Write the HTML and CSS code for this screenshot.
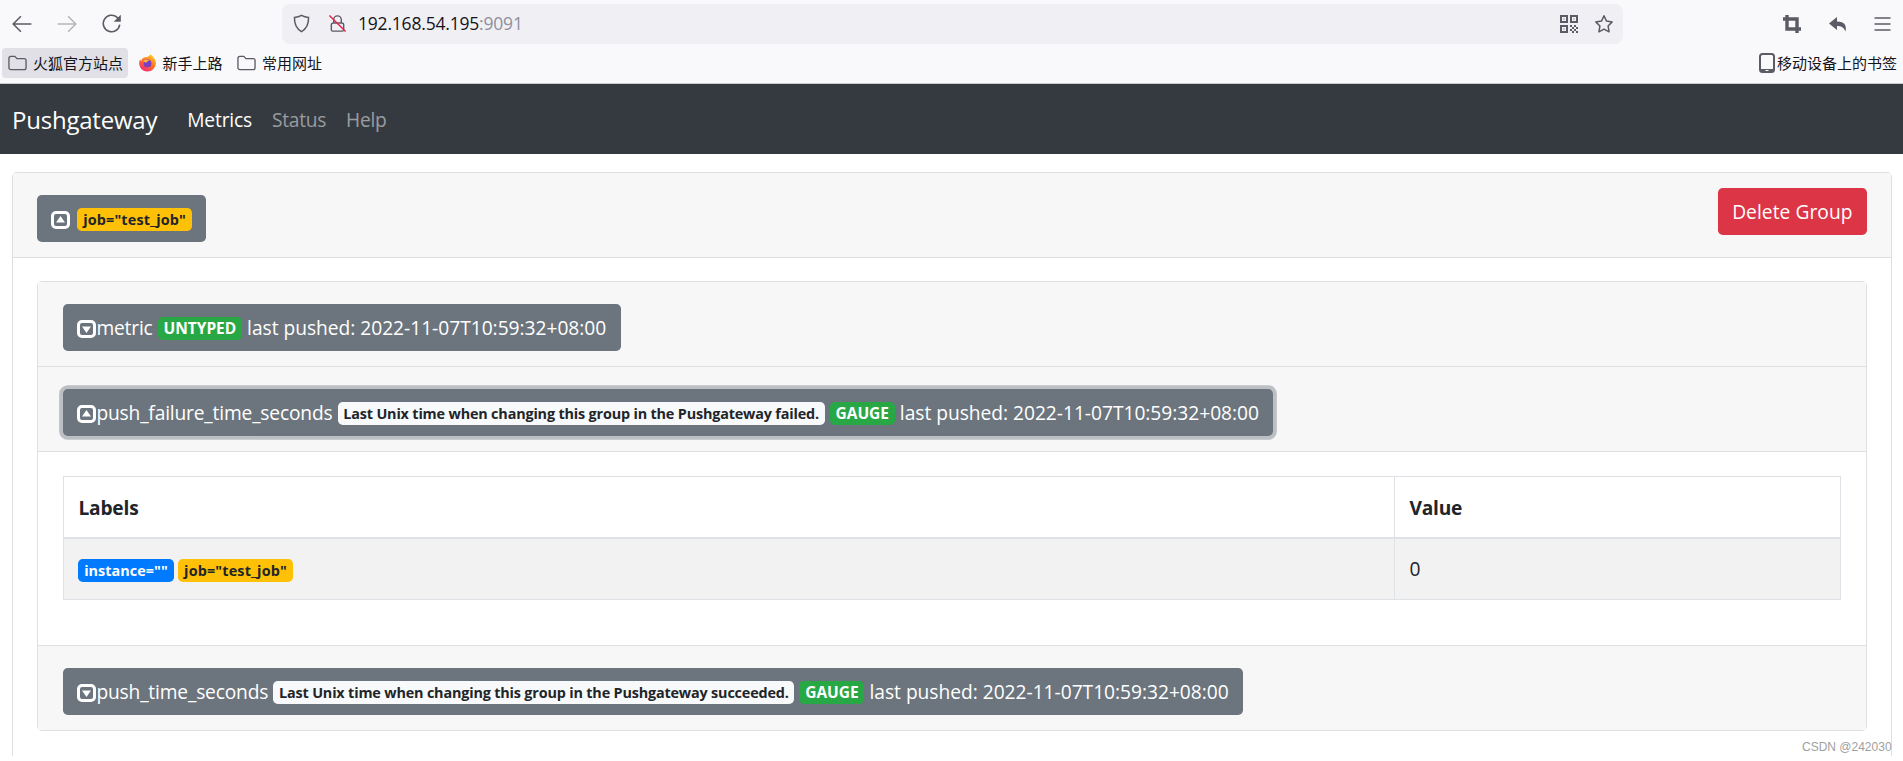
FILE: index.html
```html
<!DOCTYPE html>
<html lang="en">

<head>
    <meta charset="UTF-8">
    <title>Pushgateway</title>
    <link rel="stylesheet" href="styles.css">
</head>

<body>
    <svg class="defs" width="0" height="0">
        <symbol id="fold-up" viewBox="0 0 19 18">
            <rect x="1.5" y="1.5" width="16" height="15" rx="3.5" fill="none" stroke="#fff" stroke-width="3" />
            <path d="M9.5 5 14 11.5H5z" fill="#fff" />
        </symbol>
        <symbol id="fold-down" viewBox="0 0 19 18">
            <rect x="1.5" y="1.5" width="16" height="15" rx="3.5" fill="none" stroke="#fff" stroke-width="3" />
            <path d="M9.5 13 14 6.5H5z" fill="#fff" />
        </symbol>
        <symbol id="folder" viewBox="0 0 20 18">
            <path d="M1 4a2 2 0 0 1 2-2h4.2l2.2 2.4H17a2 2 0 0 1 2 2V14a2 2 0 0 1-2 2H3a2 2 0 0 1-2-2z" fill="none" stroke="#5b5b66" stroke-width="1.4" />
        </symbol>
    </svg>

    <!-- browser toolbar -->
    <div class="toolbar">
        <div class="tool-group">
            <svg class="tool-icon" viewBox="0 0 20 20"><path d="M18.5 10H2M9 3l-7 7 7 7" fill="none" stroke="#5b5b66" stroke-width="1.4" /></svg>
            <svg class="tool-icon" viewBox="0 0 20 20"><path d="M1.5 10H18M11 3l7 7-7 7" fill="none" stroke="#b6b6bc" stroke-width="1.4" /></svg>
            <svg class="tool-icon" viewBox="0 0 20 20"><path d="M17 10.5A7.5 7.5 0 1 1 14.6 4L17 6.4" fill="none" stroke="#5b5b66" stroke-width="1.4" /><path d="M18 1.5V8h-6.5z" fill="#5b5b66" /></svg>
        </div>
        <div class="url-bar">
            <svg class="url-shield" viewBox="0 0 20 20"><path d="M10 1.5c2.4 1.4 4.8 2 7.4 2.2.2 6.5-1.6 11.5-7.4 14.8C4.2 15.2 2.4 10.2 2.6 3.7 5.2 3.500 7.600 2.900 10 1.500z" fill="none" stroke="#5b5b66" stroke-width="1.6" /></svg>
            <svg class="url-lock" viewBox="0 0 20 20">
                <path d="M6 9V6a4 4 0 0 1 8 0v3M3.500 11.500a2 2 0 0 1 2-2h9a2 2 0 0 1 2 2v5a1.500 1.500 0 0 1-1.500 1.500H5a1.500 1.500 0 0 1-1.500-1.500z" fill="none" stroke="#5b5b66" stroke-width="1.5" />
                <path d="M1.500 1.500l17 17" stroke="#e22850" stroke-width="1.6" />
            </svg>
            <span class="url-text">192.168.54.195<span class="url-port">:9091</span></span>
            <svg class="url-qr" viewBox="0 0 18 18">
                <path d="M0 0h8v8H0zM2 2v4h4V2zM10 0h8v8h-8zM12 2v4h4V2zM0 10h8v8H0zM2 12v4h4v-4z" fill="#5b5b66" fill-rule="evenodd" />
                <path d="M3.500 3.500h1v1h-1zM13.500 3.500h1v1h-1zM3.500 13.500h1v1h-1zM10 10h2v2h-2zM14 10h2v2h-2zM12 12h2v2h-2zM16 12h2v2h-2zM10 14h2v2h-2zM14 14h2v2h-2zM12 16h2v2h-2zM16 16h2v2h-2z" fill="#5b5b66" />
            </svg>
            <svg class="url-star" viewBox="0 0 20 20"><path d="M10 1.800l2.500 5.300 5.700.8-4.100 4.100 1 5.800L10 15.100 4.900 17.800l1-5.800L1.800 7.900l5.700-.8z" fill="none" stroke="#5b5b66" stroke-width="1.500" stroke-linejoin="round" /></svg>
        </div>
        <div class="tool-group tool-right">
            <svg class="tool-action" viewBox="0 0 20 20"><path d="M5 1v14h14M1 5h14v14" fill="none" stroke="#5b5b66" stroke-width="3.4" /></svg>
            <svg class="tool-action" viewBox="0 0 20 20"><path d="M9 3 1 9.500 9 16v-4c4 0 6.500 1 8.500 5.500 1.500-6-1-10-8.500-10z" fill="#5b5b66" /></svg>
            <svg class="tool-action" viewBox="0 0 20 20"><path d="M0.500 4h16M0.500 10h16M0.500 16h16" fill="none" stroke="#5b5b66" stroke-width="1.5" /></svg>
        </div>
    </div>

    <!-- bookmarks -->
    <div class="bookmarks">
        <a class="bookmark bookmark-active"><svg class="bookmark-icon"><use href="#folder" /></svg>火狐官方站点</a>
        <a class="bookmark">
            <svg class="bookmark-icon" viewBox="0 0 20 20">
                <defs>
                    <linearGradient id="fx" x1="0.8" y1="0" x2="0.2" y2="1">
                        <stop offset="0" stop-color="#ffcf2e" />
                        <stop offset="0.45" stop-color="#ff7a1f" />
                        <stop offset="1" stop-color="#f0237c" />
                    </linearGradient>
                </defs>
                <path d="M10 19.500A9.300 9.300 0 0 1 1.800 5.800c.2 1 .6 1.500 1.200 1.900C4 4.500 7 3.400 9 3.400 11 3 12.500 2 13 .3c3 2 6.500 6 6.300 9.700A9.300 9.300 0 0 1 10 19.500z" fill="url(#fx)" />
                <circle cx="10" cy="10.500" r="4.300" fill="#7a3fc4" />
                <path d="M5.500 7.500c2-1.800 5-1.500 6.500 0-2 0-2.500 1-3 2-1.500 0-3-.5-3.500-2z" fill="#ffb43a" />
            </svg>新手上路</a>
        <a class="bookmark"><svg class="bookmark-icon"><use href="#folder" /></svg>常用网址</a>
        <a class="bookmark bookmark-mobile">
            <svg class="mobile-icon" viewBox="0 0 16 20"><rect x="1" y="1" width="14" height="18" rx="2.500" fill="none" stroke="#5b5b66" stroke-width="2" /><path d="M1 16h14v3H1z" fill="#5b5b66" /><path d="M6.500 17h3v1h-3z" fill="#fff" /></svg>移动设备上的书签</a>
    </div>

    <nav class="navbar">
        <a class="brand">Pushgateway</a>
        <a class="nav-link nav-active">Metrics</a>
        <a class="nav-link">Status</a>
        <a class="nav-link">Help</a>
    </nav>

    <div class="container">
        <div class="card group-card">
            <div class="card-header group-header">
                <button class="btn btn-secondary group-toggle"><svg class="fold-icon"><use href="#fold-up" /></svg> <span class="badge badge-warning">job="test_job"</span></button>
                <button class="btn btn-danger">Delete Group</button>
            </div>
            <div class="card-body">
                <div class="card metric-card">
                    <div class="card-header metric-header">
                        <button class="btn btn-secondary"><svg class="fold-icon"><use href="#fold-down" /></svg><span class="metric-name">metric</span> <span class="badge badge-success">UNTYPED</span> <span class="pushed">last pushed: 2022-11-07T10:59:32+08:00</span></button>
                    </div>
                    <div class="card-header metric-header">
                        <button class="btn btn-secondary btn-focus"><svg class="fold-icon"><use href="#fold-up" /></svg><span class="metric-name">push_failure_time_seconds</span> <span class="badge badge-light">Last Unix time when changing this group in the Pushgateway failed.</span> <span class="badge badge-success">GAUGE</span> <span class="pushed">last pushed: 2022-11-07T10:59:32+08:00</span></button>
                    </div>
                    <div class="metric-body">
                        <table class="table">
                            <thead>
                                <tr>
                                    <th class="col-labels">Labels</th>
                                    <th>Value</th>
                                </tr>
                            </thead>
                            <tbody>
                                <tr>
                                    <td><span class="badge badge-primary">instance=""</span> <span class="badge badge-warning">job="test_job"</span></td>
                                    <td>0</td>
                                </tr>
                            </tbody>
                        </table>
                    </div>
                    <div class="card-header metric-header metric-last">
                        <button class="btn btn-secondary"><svg class="fold-icon"><use href="#fold-down" /></svg><span class="metric-name">push_time_seconds</span> <span class="badge badge-light">Last Unix time when changing this group in the Pushgateway succeeded.</span> <span class="badge badge-success">GAUGE</span> <span class="pushed">last pushed: 2022-11-07T10:59:32+08:00</span></button>
                    </div>
                </div>
            </div>
        </div>
    </div>

    <div class="watermark">CSDN @242030</div>
</body>

</html>
```

FILE: styles.css
```css
* {
    box-sizing: border-box;
}

html,
body {
    height: 761px;
    overflow: hidden;
}

body {
    margin: 0;
    background-color: #fff;
    color: #212529;
    font-family: "Open Sans", "Noto Sans CJK SC", sans-serif;
    font-size: 19.2px;
    line-height: 28.8px;
}

.defs {
    position: absolute;
}

.toolbar {
    display: flex;
    align-items: center;
    height: 46px;
    background-color: #f9f9fb;
    padding-top: 1px;
}

.tool-group {
    display: flex;
    align-items: center;
    gap: 23px;
    width: 282px;
    padding-left: 11px;
}

.tool-right {
    width: 280px;
    gap: 26px;
    padding-left: 159px;
}

.tool-icon {
    width: 22px;
    height: 22px;
    flex: none;
}

.tool-action {
    width: 20px;
    height: 20px;
    flex: none;
}

.url-bar {
    display: flex;
    align-items: center;
    width: 1341px;
    height: 40px;
    background-color: #f0f0f4;
    border-radius: 8px;
    padding-left: 10px;
}

.url-shield {
    width: 19px;
    height: 19px;
}

.url-lock {
    width: 19px;
    height: 19px;
    margin-left: 17px;
}

.url-text {
    margin-left: 11px;
    flex: 1;
    color: #15141a;
    font-size: 17.5px;
    letter-spacing: -0.2px;
}

.url-port {
    color: #8f8f9d;
}

.url-qr {
    width: 18px;
    height: 18px;
}

.url-star {
    width: 20px;
    height: 20px;
    margin-left: 16px;
    margin-right: 9px;
}

.bookmarks {
    display: flex;
    align-items: center;
    height: 38px;
    padding: 0 6px 4px 2px;
    background-color: #f9f9fb;
    border-bottom: 1px solid #ccc;
    font-size: 15px;
    line-height: 20px;
    color: #15141a;
}

.bookmark {
    display: flex;
    align-items: center;
    gap: 6px;
    height: 30px;
    padding: 0 5px 0 6px;
    margin-right: 3.5px;
    border-radius: 4px;
}

.bookmark-active {
    background-color: #e0e0e6;
}

.bookmark-icon {
    width: 19px;
    height: 18px;
    flex: none;
}

.bookmark-mobile {
    margin: 0 0 0 auto;
    padding: 0;
    gap: 2px;
}

.mobile-icon {
    width: 16px;
    height: 20px;
}

.navbar {
    display: flex;
    align-items: center;
    height: 70px;
    padding: 3px 12px 0;
    background-color: #343a40;
}

.brand {
    margin-right: 30px;
    color: #fff;
    font-size: 24px;
    letter-spacing: -0.22px;
}

.nav-link {
    margin-right: 20px;
    color: rgba(255, 255, 255, 0.5);
    letter-spacing: -0.3px;
}

.nav-active {
    color: #fff;
    letter-spacing: -0.15px;
}

.container {
    padding: 18px 11px 0 12px;
}

.card {
    border: 1px solid #dfdfdf;
    border-radius: 4.8px;
    background-color: #fff;
}

.card-header {
    background-color: #f7f7f7;
    border-bottom: 1px solid #dfdfdf;
}

.group-card {
    height: 584px;
    border-bottom: none;
    border-radius: 4.8px 4.8px 0 0;
}

.group-header {
    display: flex;
    justify-content: space-between;
    align-items: flex-start;
    height: 85px;
    padding: 15px 24px 0;
}

.group-toggle {
    margin-top: 7px;
    padding-right: 15.4px;
}

.card-body {
    padding: 23px 24px;
}

.metric-header {
    height: 85px;
    padding: 22px 24px 0 25px;
}

.metric-last {
    border-bottom: none;
    height: 84px;
}

.metric-body {
    padding: 24px 24px 45px 25px;
    background-color: #fff;
    border-bottom: 1px solid #dfdfdf;
}

.btn {
    display: inline-block;
    height: 47px;
    padding: 1px 14.4px 0;
    border: none;
    border-radius: 4.8px;
    color: #fff;
    font-family: inherit;
    font-size: 19.2px;
    line-height: 46px;
    letter-spacing: 0.06px;
    white-space: nowrap;
    vertical-align: top;
}

.btn-secondary {
    background-color: #6c757d;
}

.btn-danger {
    background-color: #dc3545;
}

.btn-focus {
    box-shadow: 0 0 0 3.84px rgba(130, 138, 145, 0.5);
}

.fold-icon {
    width: 19px;
    height: 18px;
    vertical-align: -3px;
}

.metric-name {
    letter-spacing: -0.17px;
}

.pushed {
    letter-spacing: -0.02px;
}

.badge {
    display: inline-block;
    padding: 4px 5.76px;
    border-radius: 4.8px;
    font-size: 14.4px;
    font-weight: 700;
    line-height: 15px;
    letter-spacing: -0.17px;
    vertical-align: 1px;
}

.badge-warning {
    background-color: #ffc107;
    color: #212529;
    letter-spacing: 0.15px;
}

.group-toggle .badge-warning {
    margin-left: 2px;
}

.badge-success {
    background-color: #28a745;
    color: #fff;
    font-size: 15.5px;
    letter-spacing: 0;
}

.badge-light {
    background-color: #f8f9fa;
    color: #212529;
}

.badge-primary {
    background-color: #007bff;
    color: #fff;
    letter-spacing: 0.05px;
}

.table {
    width: 1778px;
    border-collapse: collapse;
}

.table th,
.table td {
    border: 1px solid #dee2e6;
    padding: 16.9px 14.4px 13.9px;
    text-align: left;
    letter-spacing: -0.2px;
}

.table td {
    padding-bottom: 14.9px;
}

.table th {
    border-bottom-width: 2px;
}

.table .badge {
    vertical-align: 0;
}

.col-labels {
    width: 1331px;
}

.table tbody tr {
    background-color: #f2f2f2;
}

.watermark {
    position: absolute;
    left: 1802px;
    top: 739px;
    color: #a0a0a0;
    font-family: "Liberation Sans", sans-serif;
    font-size: 12px;
    line-height: 16px;
}
```
